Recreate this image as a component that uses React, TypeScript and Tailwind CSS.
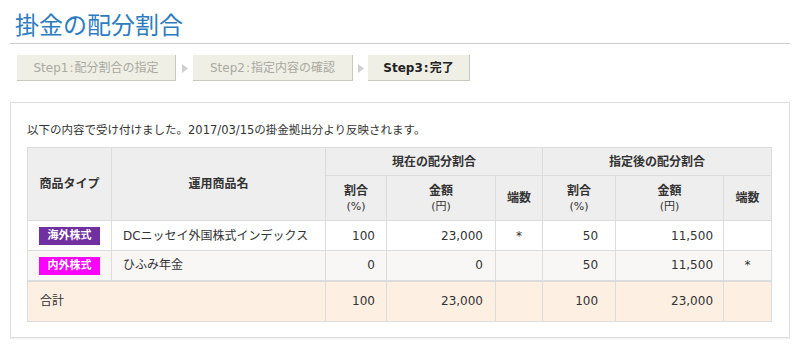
import React from 'react';

interface AllocationRow {
  type: string;
  typeColor: string;
  name: string;
  currentRate: string;
  currentAmount: string;
  currentFraction: string;
  nextRate: string;
  nextAmount: string;
  nextFraction: string;
}

const rows: AllocationRow[] = [
  {
    type: '海外株式',
    typeColor: 'bg-[#7030a0]',
    name: 'DCニッセイ外国株式インデックス',
    currentRate: '100',
    currentAmount: '23,000',
    currentFraction: '*',
    nextRate: '50',
    nextAmount: '11,500',
    nextFraction: ''
  },
  {
    type: '内外株式',
    typeColor: 'bg-[#ff00ff]',
    name: 'ひふみ年金',
    currentRate: '0',
    currentAmount: '0',
    currentFraction: '',
    nextRate: '50',
    nextAmount: '11,500',
    nextFraction: '*'
  }
];

const steps = [
  { step: 'Step1', label: '配分割合の指定', width: 'w-[159px]', arrow: '', active: false },
  { step: 'Step2', label: '指定内容の確認', width: 'w-[160px]', arrow: 'w-[17px]', active: false },
  { step: 'Step3', label: '完了', width: 'w-[102px]', arrow: 'w-[15px]', active: true }
];

const StepArrow = ({ width }: { width: string }) => (
  <div className={`${width} flex justify-center`}>
    <svg width="6" height="9" viewBox="0 0 6 9">
      <path d="M0 0 L6 4.5 L0 9 Z" fill="#cfcfcf" />
    </svg>
  </div>
);

const th = 'border border-[#dcdcdc] bg-[#eeeeee] font-bold text-center align-middle';
const td = 'border border-[#dcdcdc] align-middle';

const App = () => {
  return (
    <div className="w-[800px] h-[349px] bg-white text-[#333] text-[12px] font-['DejaVu_Sans','Noto_Sans_CJK_JP',sans-serif] overflow-hidden">
      <div className="px-[10px] pt-[8px]">
        <h1 className="pl-[5px] pb-[4px] text-[24px] leading-[31px] text-[#2d7cbf] border-b border-[#cccccc] font-['Noto_Sans_CJK_JP',sans-serif]">
          掛金の配分割合
        </h1>

        {/* step indicator */}
        <div className="flex items-center mt-[11px] pl-[7px]">
          {steps.map((step, index) => (
            <React.Fragment key={index}>
              {step.arrow && <StepArrow width={step.arrow} />}
              <div
                className={`${step.width} h-[26px] flex items-center justify-center bg-[#efefe6] border-r border-b border-[#c8c8c0] ${
                  step.active ? 'font-bold text-[#222]' : 'text-[#a9a9a0]'
                }`}
              >
                {step.step}
                <span className="mx-[1px]">:</span>
                {step.label}
              </div>
            </React.Fragment>
          ))}
        </div>

        <div className="mt-[21px] border border-[#dddddd] shadow-[0_1px_1px_rgba(0,0,0,0.05)] px-[16px] pt-[19px] pb-[15px]">
          <p className="leading-[16px] mb-[9px] text-[11.5px]">
            以下の内容で受け付けました。2017/03/15の掛金拠出分より反映されます。
          </p>

          <table className="border-collapse border border-[#d4d4d4] w-[744px] table-fixed">
            <colgroup>
              <col className="w-[84px]" />
              <col className="w-[214px]" />
              <col className="w-[61px]" />
              <col className="w-[109px]" />
              <col className="w-[47px]" />
              <col className="w-[73px]" />
              <col className="w-[108px]" />
              <col className="w-[48px]" />
            </colgroup>
            <thead>
              <tr className="h-[28px]">
                <th rowSpan={2} className={th}>商品タイプ</th>
                <th rowSpan={2} className={th}>運用商品名</th>
                <th colSpan={3} className={th}>現在の配分割合</th>
                <th colSpan={3} className={th}>指定後の配分割合</th>
              </tr>
              <tr className="h-[45px]">
                <th className={th}>
                  <div className="leading-[16px]">割合</div>
                  <div className="font-normal text-[11px] leading-[15px]">(%)</div>
                </th>
                <th className={th}>
                  <div className="leading-[16px]">金額</div>
                  <div className="font-normal text-[11px] leading-[15px]">(円)</div>
                </th>
                <th className={th}>端数</th>
                <th className={th}>
                  <div className="leading-[16px]">割合</div>
                  <div className="font-normal text-[11px] leading-[15px]">(%)</div>
                </th>
                <th className={th}>
                  <div className="leading-[16px]">金額</div>
                  <div className="font-normal text-[11px] leading-[15px]">(円)</div>
                </th>
                <th className={th}>端数</th>
              </tr>
            </thead>
            <tbody>
              {rows.map((row, index) => (
                <tr key={index} className={`h-[30px] ${index % 2 === 1 ? 'bg-[#f8f7f5]' : 'bg-white'}`}>
                  <td className={`${td} text-center`}>
                    <span className={`inline-flex items-center justify-center w-[61px] h-[18px] ${row.typeColor} text-white font-bold text-[11px]`}>
                      {row.type}
                    </span>
                  </td>
                  <td className={`${td} pl-[11px]`}>{row.name}</td>
                  <td className={`${td} text-right pr-[11px]`}>{row.currentRate}</td>
                  <td className={`${td} text-right pr-[12px]`}>{row.currentAmount}</td>
                  <td className={`${td} text-center`}>{row.currentFraction}</td>
                  <td className={`${td} text-right pr-[17px]`}>{row.nextRate}</td>
                  <td className={`${td} text-right pr-[10px]`}>{row.nextAmount}</td>
                  <td className={`${td} text-center`}>{row.nextFraction}</td>
                </tr>
              ))}
              <tr className="h-[41px] bg-[#fdefe2] border-t-2 border-[#dcdcdc]">
                <td colSpan={2} className={`${td} pl-[12px]`}>合計</td>
                <td className={`${td} text-right pr-[11px]`}>100</td>
                <td className={`${td} text-right pr-[12px]`}>23,000</td>
                <td className={td}></td>
                <td className={`${td} text-right pr-[17px]`}>100</td>
                <td className={`${td} text-right pr-[10px]`}>23,000</td>
                <td className={td}></td>
              </tr>
            </tbody>
          </table>
        </div>
      </div>
    </div>
  );
};

export default App;
